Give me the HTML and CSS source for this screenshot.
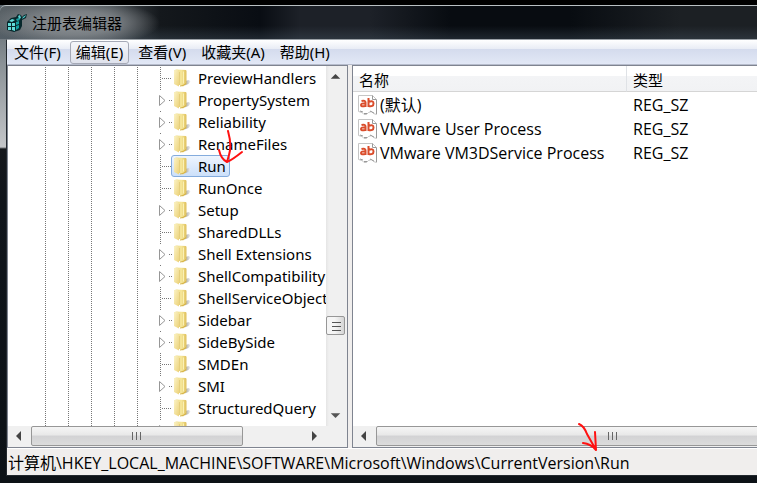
FILE: index.html
```html
<!DOCTYPE html>
<html lang="zh-CN">
<head>
<meta charset="utf-8">
<title>注册表编辑器</title>
<link rel="stylesheet" href="styles.css">
</head>
<body>
<svg class="defs" aria-hidden="true">
  <defs>
    <linearGradient id="back" x1="0" x2="1" y1="0" y2="0"><stop offset="0" stop-color="#efdf98"/><stop offset=".6" stop-color="#f5e596"/><stop offset="1" stop-color="#dfc05c"/></linearGradient>
    <linearGradient id="front" x1="0" x2="1" y1="0" y2="1"><stop offset="0" stop-color="#fbf3c6"/><stop offset="1" stop-color="#ecd27a"/></linearGradient>
    <linearGradient id="shade" x1="0" x2="1" y1="0" y2="0"><stop offset="0" stop-color="#999"/><stop offset="1" stop-color="#f2f2f2"/></linearGradient>
    <symbol id="folder" viewBox="0 0 18 18">
      <path d="M12 12l4-1 1.500 1.500-2 2.500-4 1.500z" fill="url(#shade)"/>
      <path d="M1 1.500L3 .500l10 .5.500 1v13L10 17.500 7 16l-5.500-1z" fill="url(#back)"/>
      <path d="M1 1.500L4.500.500 6 3v14.500L1 15z" fill="url(#front)"/>
      <path d="M10.500 2.500v12" stroke="#fbf1b5" fill="none"/>
      <path d="M6.500 3v13" stroke="#e6cf7c" fill="none"/>
      <path d="M7 17l3-.5 3-2" stroke="#d6b347" fill="none"/>
    </symbol>
    <symbol id="leaf" viewBox="0 0 23 22">
      <path d="M11.500 0v22" stroke="#777" stroke-dasharray="1 1"/>
      <path d="M13 11.500h10" stroke="#777" stroke-dasharray="1 1"/>
    </symbol>
    <symbol id="branch" viewBox="0 0 23 22">
      <path d="M11 .500h1M20 11.500h1M22 11.500h1" stroke="#777"/>
      <path d="M10.500 6.500v10l5.500-5z" fill="#fff" stroke="#969696"/>
    </symbol>
    <symbol id="string" viewBox="0 0 20 20">
      <path d="M.500 .500h14l4 4v15l-3-1-2-2-3 1-2 2H6l-2-2-3.500-1z" fill="#fff" stroke="#c5c5c5"/>
      <path d="M14.500 .500v4h4M18.500 5v14M2 16l3 1M6 18.500h3M12 16l4 2" fill="none" stroke="#999"/>
      <path d="M3.500 6q4-1 4 1.500v4.500M7 8.500q-4-.5-4 1.500t4 1M10.500 3v9M10.500 7q5-2 5 1.500t-5 2.500" fill="none" stroke="#da4d2c" stroke-width="2"/>
    </symbol>
  </defs>
</svg>
<main class="window">
  <header class="title">
    <svg class="logo" viewBox="0 0 20 20" aria-hidden="true">
      <path d="M0 9l4-4 5-1 2-3 3 1 1 2 2-2 3-1-1 4-4 2v6l-2 4-6 2-7-2z" fill="#08282c"/>
      <path d="M2 8l3-2 3 1-3 2zM1 10h3v3H1zM5 10h3v3H5zM1 14h3v3H1zM5 14h3v4l-3-1z" fill="#62dcd9"/>
      <path d="M9 9l3-1v3l-3 1zM9 13l3-1v3l-3 2zM9 6l3-1 1 2-3 1z" fill="#159fa0"/>
      <path d="M11 3l2-1 1 3-2 1zM16 4l3-2-1 2-3 2z" fill="#57d3d2"/>
    </svg>
    <h1>注册表编辑器</h1>
  </header>
  <div class="client">
    <nav class="menu" aria-label="菜单">
      <button type="button">文件(F)</button>
      <button type="button" class="hot">编辑(E)</button>
      <button type="button">查看(V)</button>
      <button type="button">收藏夹(A)</button>
      <button type="button">帮助(H)</button>
    </nav>
    <div class="panes">
      <section class="pane keys">
        <div class="view">
          <div class="tree">
            <div class="guides"></div>
            <ul>
              <li><svg class="line"><use href="#leaf"/></svg><button type="button"><svg class="folder"><use href="#folder"/></svg>PreviewHandlers</button></li>
              <li><svg class="line"><use href="#branch"/></svg><button type="button"><svg class="folder"><use href="#folder"/></svg>PropertySystem</button></li>
              <li><svg class="line"><use href="#branch"/></svg><button type="button"><svg class="folder"><use href="#folder"/></svg>Reliability</button></li>
              <li><svg class="line"><use href="#branch"/></svg><button type="button"><svg class="folder"><use href="#folder"/></svg>RenameFiles</button></li>
              <li><svg class="line"><use href="#leaf"/></svg><button type="button" class="selected"><svg class="folder"><use href="#folder"/></svg>Run</button></li>
              <li><svg class="line"><use href="#leaf"/></svg><button type="button"><svg class="folder"><use href="#folder"/></svg>RunOnce</button></li>
              <li><svg class="line"><use href="#branch"/></svg><button type="button"><svg class="folder"><use href="#folder"/></svg>Setup</button></li>
              <li><svg class="line"><use href="#leaf"/></svg><button type="button"><svg class="folder"><use href="#folder"/></svg>SharedDLLs</button></li>
              <li><svg class="line"><use href="#branch"/></svg><button type="button"><svg class="folder"><use href="#folder"/></svg>Shell Extensions</button></li>
              <li><svg class="line"><use href="#branch"/></svg><button type="button"><svg class="folder"><use href="#folder"/></svg>ShellCompatibility</button></li>
              <li><svg class="line"><use href="#leaf"/></svg><button type="button"><svg class="folder"><use href="#folder"/></svg>ShellServiceObject</button></li>
              <li><svg class="line"><use href="#branch"/></svg><button type="button"><svg class="folder"><use href="#folder"/></svg>Sidebar</button></li>
              <li><svg class="line"><use href="#branch"/></svg><button type="button"><svg class="folder"><use href="#folder"/></svg>SideBySide</button></li>
              <li><svg class="line"><use href="#leaf"/></svg><button type="button"><svg class="folder"><use href="#folder"/></svg>SMDEn</button></li>
              <li><svg class="line"><use href="#branch"/></svg><button type="button"><svg class="folder"><use href="#folder"/></svg>SMI</button></li>
              <li><svg class="line"><use href="#leaf"/></svg><button type="button"><svg class="folder"><use href="#folder"/></svg>StructuredQuery</button></li>
              <li><svg class="line"><use href="#branch"/></svg><button type="button"><svg class="folder"><use href="#folder"/></svg>S</button></li>
            </ul>
          </div>
          <div class="vbar">
            <svg class="arrow" viewBox="0 0 20 20"><path d="M5 13l5-5 5 5z" fill="#444"/></svg>
            <div class="vthumb"><svg viewBox="0 0 12 12"><path d="M2 2.500h9M2 6.500h9M2 10.500h9" stroke="#555"/></svg></div>
            <svg class="arrow" viewBox="0 0 20 20"><path d="M5 7l5 5 5-5z" fill="#555"/></svg>
          </div>
        </div>
        <div class="hbar">
          <svg class="arrow" viewBox="0 0 20 20"><path d="M12 5l-5 5 5 5z" fill="#444"/></svg>
          <div class="hthumb"><svg viewBox="0 0 12 12"><path d="M1.500 2v8M5.500 2v8M9.500 2v8" stroke="#666"/></svg></div>
          <svg class="arrow end" viewBox="0 0 20 20"><path d="M8 5l5 5-5 5z" fill="#444"/></svg>
        </div>
      </section>
      <section class="pane values">
        <div class="view">
          <table>
            <thead><tr><th class="name">名称</th><th>类型</th></tr></thead>
            <tbody>
              <tr><td><span><svg class="string"><use href="#string"/></svg>(默认)</span></td><td>REG_SZ</td></tr>
              <tr><td><span><svg class="string"><use href="#string"/></svg>VMware User Process</span></td><td>REG_SZ</td></tr>
              <tr><td><span><svg class="string"><use href="#string"/></svg>VMware VM3DService Process</span></td><td>REG_SZ</td></tr>
            </tbody>
          </table>
        </div>
        <div class="hbar">
          <svg class="arrow" viewBox="0 0 20 20"><path d="M12 5l-5 5 5 5z" fill="#444"/></svg>
          <div class="hthumb wide"><svg viewBox="0 0 12 12"><path d="M1.500 2v8M5.500 2v8M9.500 2v8" stroke="#666"/></svg></div>
        </div>
      </section>
    </div>
    <footer class="status">计算机\HKEY_LOCAL_MACHINE\SOFTWARE\Microsoft\Windows\CurrentVersion\Run</footer>
  </div>
</main>
<svg class="mark key-mark" viewBox="0 0 26 34" aria-hidden="true"><path d="M11 1q4 14 1 24l-2 7M2 20q2 9 8 12 5-2 15-10"/></svg>
<svg class="mark path-mark" viewBox="0 0 22 30" aria-hidden="true"><path d="M2 2q5 2 8 10l9 16M6 21q8 1 13 7l-1-18"/></svg>
</body>
</html>
```
FILE: styles.css
```css
* { box-sizing: border-box; }

body {
  margin: 0;
  background: #000;
  color: #000;
  font: 15px/20px "Noto Sans", "Noto Sans CJK SC", sans-serif;
  overflow: hidden;
}

button {
  font: inherit;
  color: inherit;
  background: none;
  border: 1px solid transparent;
  white-space: nowrap;
}

svg { display: block; flex: none; }
.defs { position: absolute; width: 0; height: 0; }

.window {
  display: flex;
  flex-direction: column;
  height: 100vh;
  border-top: 5px solid #000;
  padding: 0 0 7px 6px;
  background: linear-gradient(#59636a 0, #8b9297 60px, #c4c6c9 142px, #15181c 144px, #10151b 200px, #0c1116 100%);
  position: relative;
}

.title {
  display: flex;
  align-items: center;
  gap: 5px;
  height: 34px;
  margin-left: -6px;
  padding-left: 7px;
  border-top: 1px solid #b9c0c3;
  border-top-left-radius: 6px;
  background:
    radial-gradient(ellipse 85px 24px at 75px 17px, #8f9497 0, #858a8ecc 50%, transparent 100%),
    linear-gradient(transparent 60%, #4a5a6855 100%),
    linear-gradient(90deg, #596166 0, #454b50 110px, #14181c 160px, #090d13 260px, #1d2128 300px, #1d2128 370px, #080c11 450px, #080c11 570px, #1c2024 680px, #1c2024 100%);
}
.title h1 { margin: 0; font-size: 15px; font-weight: 400; }
.logo { width: 20px; height: 20px; }

.client {
  flex: 1;
  min-height: 0;
  display: flex;
  flex-direction: column;
  border: 1px solid #22282e;
  border-top-color: #9aa0a6;
  border-right: 0;
  background: #f0eeed;
}

.menu {
  display: flex;
  gap: 3px;
  padding: 1px 0 0 1px;
  height: 25px;
  border-bottom: 1px solid #b6bccc;
  background: linear-gradient(#fff 0, #e8ecf5 9px, #d4dbed 9px, #e2e8f6 100%);
}
.menu button { height: 23px; padding: 0 5px; line-height: 21px; }
.menu .hot {
  border-color: #a5a9b6;
  border-radius: 3px;
  background: linear-gradient(#f5f6fa, #dfe2ec);
}

.panes { flex: 1; min-height: 0; display: flex; gap: 4px; }
.pane {
  display: flex;
  flex-direction: column;
  border: 1px solid #7f8490;
  background: #fff;
  min-width: 0;
}
.keys { flex: 0 0 341px; }
.values { flex: 1; border-right: 0; }
.view { flex: 1; min-height: 0; display: flex; overflow: hidden; }

.tree { flex: 1; min-width: 0; display: flex; padding: 1px 0 0 26px; overflow: hidden; }
.guides {
  flex: 0 0 115px;
  background:
    repeating-linear-gradient(transparent 0 1px, #fff 1px 2px),
    repeating-linear-gradient(90deg, transparent 0 11px, #777 11px 12px, transparent 12px 23px);
}
.tree ul { margin: 0; padding: 0; list-style: none; }
.tree li { display: flex; height: 22px; }
.line { width: 23px; height: 22px; margin-right: -1px; }
.tree button {
  display: flex;
  align-items: center;
  gap: 7px;
  height: 22px;
  padding: 0 3px 0 1px;
  border-radius: 3px;
}
.tree .selected {
  border-color: #84acdd;
  background: linear-gradient(#eef5fe, #cce0fa);
}
.folder { width: 18px; height: 18px; }

.vbar {
  flex: 0 0 21px;
  display: flex;
  flex-direction: column;
  padding-right: 2px;
  background: linear-gradient(90deg, #e5e5e5, #f0f0f0 3px);
}
.arrow { width: 20px; height: 20px; }
.vthumb, .hthumb {
  display: flex;
  align-items: center;
  justify-content: center;
  border: 1px solid #979797;
  border-radius: 2px;
}
.vthumb { height: 19px; margin-top: 230px; background: linear-gradient(90deg, #f5f5f5 45%, #d5d5d5); }
.vbar .arrow { width: 19px; }
.vthumb + .arrow { margin-top: auto; }
.vthumb svg, .hthumb svg { width: 12px; height: 12px; }
.hbar { flex: none; display: flex; height: 21px; background: #f0f0f0; overflow: hidden; padding: 0 0 1px 1px; }
.hthumb { flex: 0 0 212px; margin-left: 2px; background: linear-gradient(#f5f5f5 0, #e8e8e8 45%, #d2d2d4 50%, #dcdcdc 100%); }
.hthumb.wide { flex-basis: 473px; }
.end { margin-left: auto; margin-right: 23px; }

table {
  width: 100%;
  table-layout: fixed;
  border-collapse: separate;
  border-spacing: 0;
  align-self: flex-start;
  font: 16px/20px "Open Sans", "Noto Sans CJK SC", sans-serif;
}
th {
  height: 26px;
  padding: 2px 0 0 6px;
  text-align: left;
  font-size: 15px;
  font-weight: 400;
  border-bottom: 1px solid #d5d5d5;
  background: linear-gradient(#fff 40%, #f3f4f6 42%, #f1f2f4);
}
.name { width: 274px; border-right: 1px solid #dfe2e6; }
td { height: 24px; padding: 1px 0 0 6px; }
td:first-child { padding-left: 5px; }
td span { display: flex; align-items: center; gap: 2px; }
.string { width: 20px; height: 20px; }

.status {
  flex: none;
  height: 27px;
  padding: 4px 1px 0;
  font: 16px/20px "Open Sans", "Noto Sans CJK SC", sans-serif;
  white-space: nowrap;
  border-top: 1px solid #fff;
}

.mark { position: absolute; fill: none; stroke: #f11; stroke-width: 2; stroke-linecap: round; stroke-linejoin: round; }
.key-mark { left: 217px; top: 130px; width: 26px; height: 34px; }
.path-mark { left: 577px; top: 422px; width: 22px; height: 30px; }
```
